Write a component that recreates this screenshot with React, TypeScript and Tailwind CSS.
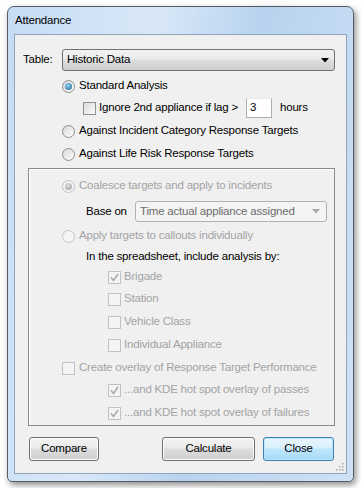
import React from 'react'

const font = { fontFamily: '"Liberation Sans", Arial, sans-serif' }

function Radio({ checked = false, disabled = false }: { checked?: boolean; disabled?: boolean }) {
  return (
    <span
      className={`relative flex h-[13px] w-[13px] shrink-0 items-center justify-center rounded-full border ${
        disabled ? 'border-[#c2c2c2] bg-[#f4f4f4]' : 'border-[#8e8f8f] bg-gradient-to-br from-[#d9d9d9] to-[#fdfdfd]'
      }`}
    >
      {checked && (
        <span
          className={`h-[7px] w-[7px] rounded-full ${
            disabled
              ? 'bg-[radial-gradient(circle_at_40%_35%,#e0e0e0,#9a9a9a)]'
              : 'bg-[radial-gradient(circle_at_40%_35%,#8fd2f5,#1f5c86)]'
          }`}
        />
      )}
    </span>
  )
}

function Check({ checked = false, disabled = false }: { checked?: boolean; disabled?: boolean }) {
  return (
    <span
      className={`flex h-[13px] w-[13px] shrink-0 items-center justify-center border ${
        disabled ? 'border-[#c2c2c2] bg-[#f4f4f4]' : 'border-[#8e8f8f] bg-gradient-to-br from-[#dcdcdc] to-[#fafafa]'
      }`}
    >
      {checked && (
        <svg width="9" height="9" viewBox="0 0 9 9">
          <path d="M1 4.5 L3.5 7.5 L8 1" fill="none" stroke={disabled ? '#a8a8a8' : '#4a5f97'} strokeWidth="1.6" />
        </svg>
      )}
    </span>
  )
}

function Arrow({ color }: { color: string }) {
  return (
    <svg width="8" height="5" viewBox="0 0 8 5">
      <path d="M0 0 H8 L4 4.5 Z" fill={color} />
    </svg>
  )
}

function Button({ label, w, focused = false }: { label: string; w: string; focused?: boolean }) {
  return (
    <div
      className={`flex h-[24px] ${w} items-center justify-center rounded-[3px] border text-black ${
        focused
          ? 'border-[#3c7fb1] bg-[linear-gradient(#eaf6fd_0%,#d9f0fc_45%,#bee6fd_50%,#a7d9f5_100%)] shadow-[inset_0_0_0_1px_#b9e6fb]'
          : 'border-[#707070] bg-[linear-gradient(#f2f2f2_0%,#ebebeb_45%,#dddddd_50%,#cfcfcf_100%)] shadow-[inset_0_0_0_1px_#fcfcfc]'
      }`}
    >
      {label}
    </div>
  )
}

export default function App() {
  const dis = 'text-[#a3a3a3]'
  return (
    <div
      className="h-[488px] w-[361px] overflow-hidden bg-white pl-[7px] pt-[6px] text-[11.5px] tracking-[-0.2px]"
      style={font}
    >
      <div className="flex h-[476px] w-[347px] flex-col rounded-t-[7px] rounded-b-[5px] border border-[#555d68] bg-[linear-gradient(100deg,#c5dcf4_0%,#d9e8f8_35%,#b8d3ef_60%,#cfe1f5_100%)] shadow-[2px_3px_6px_rgba(0,0,0,0.45)]">
        {/* Title bar */}
        <div className="flex h-[27px] shrink-0 items-center pl-[7px] text-black">Attendance</div>

        {/* Client area */}
        <div className="relative mx-[6px] flex h-[440px] flex-col border border-[#8ea4bd] bg-[#f0f0f0] text-black">
          <div className="mt-[14px] flex h-[22px] items-center pl-[8px]">
            <span className="w-[39px]">Table:</span>
            <div className="flex h-[22px] w-[273px] items-center justify-between rounded-[3px] border border-[#707070] bg-[linear-gradient(#f2f2f2_0%,#ebebeb_45%,#dddddd_50%,#cfcfcf_100%)] pl-[4px] pr-[5px]">
              <span>Historic Data</span>
              <Arrow color="#000" />
            </div>
          </div>

          <div className="mt-[5px] flex h-[20px] items-center gap-[4px] pl-[47px]">
            <Radio checked />
            <span>Standard Analysis</span>
          </div>

          <div className="mt-[2px] flex h-[20px] items-center pl-[68px]">
            <Check />
            <span className="ml-[3px]">Ignore 2nd appliance if lag &gt;</span>
            <div className="ml-[8px] flex h-[20px] w-[26px] items-center border border-[#abadb3] border-t-[#e3e9ef] bg-white pl-[3px]">3</div>
            <span className="ml-[8px]">hours</span>
          </div>

          <div className="mt-[3px] flex h-[20px] items-center gap-[4px] pl-[47px]">
            <Radio />
            <span>Against Incident Category Response Targets</span>
          </div>

          <div className="mt-[3px] flex h-[20px] items-center gap-[4px] pl-[47px]">
            <Radio />
            <span>Against Life Risk Response Targets</span>
          </div>

          {/* Disabled group */}
          <div className="ml-[13px] mr-[11px] mt-[4px] flex h-[258px] flex-col border border-[#8a8a8a] shadow-[inset_1px_1px_0_#ffffff]">
            <div className="mt-[7px] flex h-[20px] items-center gap-[4px] pl-[33px]">
              <Radio checked disabled />
              <span className={dis}>Coalesce targets and apply to incidents</span>
            </div>
            <div className="mt-[5px] flex h-[21px] items-center pl-[57px]">
              <span className="w-[49px]">Base on</span>
              <div className="flex h-[21px] w-[192px] items-center justify-between rounded-[3px] border border-[#adb2b5] bg-[#f4f4f4] pl-[4px] pr-[6px]">
                <span className="text-[#6d6d6d]">Time actual appliance assigned</span>
                <Arrow color="#a9a9a9" />
              </div>
            </div>
            <div className="mt-[4px] flex h-[20px] items-center gap-[4px] pl-[33px]">
              <Radio disabled />
              <span className={dis}>Apply targets to callouts individually</span>
            </div>
            <div className="mt-[1px] flex h-[20px] items-center pl-[57px]">In the spreadsheet, include analysis by:</div>
            <div className="flex h-[20px] items-center gap-[3px] pl-[79px]">
              <Check checked disabled />
              <span className={dis}>Brigade</span>
            </div>
            <div className="mt-[2px] flex h-[20px] items-center gap-[3px] pl-[79px]">
              <Check disabled />
              <span className={dis}>Station</span>
            </div>
            <div className="mt-[3px] flex h-[20px] items-center gap-[3px] pl-[79px]">
              <Check disabled />
              <span className={dis}>Vehicle Class</span>
            </div>
            <div className="mt-[3px] flex h-[20px] items-center gap-[3px] pl-[79px]">
              <Check disabled />
              <span className={dis}>Individual Appliance</span>
            </div>
            <div className="mt-[3px] flex h-[20px] items-center gap-[4px] pl-[33px]">
              <Check disabled />
              <span className={`${dis} whitespace-nowrap`}>Create overlay of Response Target Performance</span>
            </div>
            <div className="mt-[2px] flex h-[20px] items-center gap-[3px] pl-[79px]">
              <Check checked disabled />
              <span className={dis}>...and KDE hot spot overlay of passes</span>
            </div>
            <div className="mt-[3px] flex h-[20px] items-center gap-[3px] pl-[79px]">
              <Check checked disabled />
              <span className={dis}>...and KDE hot spot overlay of failures</span>
            </div>
          </div>

          {/* Buttons */}
          <div className="mt-[11px] flex items-center pl-[14px] pr-[12px]">
            <Button label="Compare" w="w-[70px]" />
            <div className="flex-1" />
            <Button label="Calculate" w="w-[93px]" />
            <div className="w-[8px]" />
            <Button label="Close" w="w-[71px]" focused />
          </div>

          {/* Size grip */}
          <svg className="absolute bottom-[2px] right-[2px]" width="10" height="10" viewBox="0 0 10 10">
            {[
              [8, 2],
              [8, 5],
              [5, 5],
              [8, 8],
              [5, 8],
              [2, 8],
            ].map(([x, y], i) => (
              <rect key={i} x={x} y={y} width="1.5" height="1.5" fill="#a8a8a8" />
            ))}
          </svg>
        </div>
      </div>
    </div>
  )
}
